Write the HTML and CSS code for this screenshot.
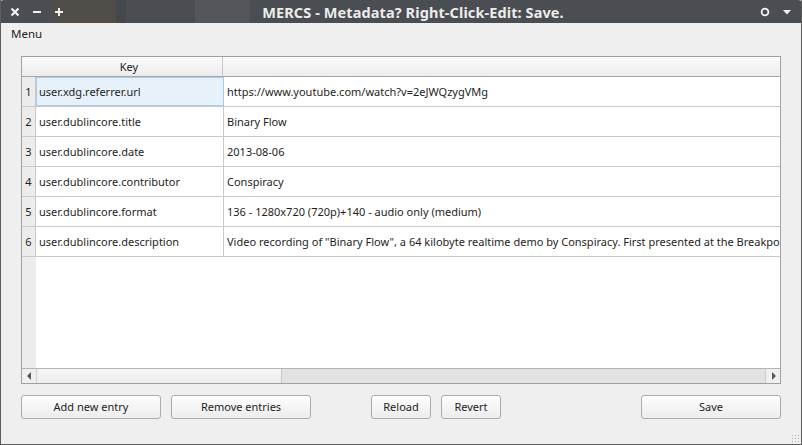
FILE: index.html
```html
<!DOCTYPE html>
<html>
<head>
<meta charset="utf-8">
<link rel="stylesheet" href="styles.css">
</head>
<body>
<div class="window">
  <div class="titlebar">
    <div class="tb-left">
      <svg class="tb-ico" width="10" height="10" viewBox="0 0 10 10"><path d="M1.5 1.5 L8.5 8.5 M8.5 1.5 L1.5 8.5" stroke="#f2f2f2" stroke-width="2.2"/></svg>
      <svg class="tb-ico" width="10" height="10" viewBox="0 0 10 10"><path d="M1 5 H9" stroke="#f2f2f2" stroke-width="2"/></svg>
      <svg class="tb-ico" width="10" height="10" viewBox="0 0 10 10"><path d="M1 5 H9 M5 1 V9" stroke="#f2f2f2" stroke-width="2"/></svg>
    </div>
    <div class="tb-title">MERCS - Metadata? Right-Click-Edit: Save.</div>
    <div class="tb-right">
      <svg width="10" height="10" viewBox="0 0 10 10"><circle cx="5" cy="5" r="3.4" fill="none" stroke="#f2f2f2" stroke-width="1.8"/></svg>
      <svg width="10" height="10" viewBox="0 0 10 10"><path d="M1 3 H9 L5 7.5 Z" fill="#f2f2f2"/></svg>
    </div>
  </div>
  <div class="menubar"><span class="menu-item">Menu</span></div>
  <div class="content">
    <div class="table">
      <div class="thead">
        <div class="th th-key">Key</div>
        <div class="th th-val"></div>
      </div>
      <div class="tbody">
        <div class="row"><div class="num">1</div><div class="cell key selected">user.xdg.referrer.url</div><div class="cell val">https://www.youtube.com/watch?v=2eJWQzygVMg</div></div>
        <div class="row"><div class="num">2</div><div class="cell key">user.dublincore.title</div><div class="cell val">Binary Flow</div></div>
        <div class="row"><div class="num">3</div><div class="cell key">user.dublincore.date</div><div class="cell val">2013-08-06</div></div>
        <div class="row"><div class="num">4</div><div class="cell key">user.dublincore.contributor</div><div class="cell val">Conspiracy</div></div>
        <div class="row"><div class="num">5</div><div class="cell key">user.dublincore.format</div><div class="cell val">136 - 1280x720 (720p)+140 - audio only (medium)</div></div>
        <div class="row"><div class="num">6</div><div class="cell key">user.dublincore.description</div><div class="cell val">Video recording of "Binary Flow", a 64 kilobyte realtime demo by Conspiracy. First presented at the Breakpoint 2010 demoparty.</div></div>
        <div class="filler"><div class="num-fill"></div><div class="blank"></div></div>
      </div>
      <div class="hscroll">
        <div class="arrow"><svg width="5" height="8" viewBox="0 0 5 8"><path d="M4 0 V8 L0 4 Z" fill="#555"/></svg></div>
        <div class="handle"></div>
        <div class="track"></div>
        <div class="arrow arrow-r"><svg width="5" height="8" viewBox="0 0 5 8"><path d="M1 0 V8 L5 4 Z" fill="#555"/></svg></div>
      </div>
    </div>
    <div class="buttons">
      <button class="btn btn-wide">Add new entry</button>
      <button class="btn btn-wide">Remove entries</button>
      <div class="spacer-a"></div>
      <button class="btn btn-small">Reload</button>
      <button class="btn btn-small">Revert</button>
      <div class="spacer-b"></div>
      <button class="btn btn-wide">Save</button>
    </div>
  </div>
  <div class="grip"></div>
</div>
</body>
</html>
```

FILE: styles.css
```css
html, body {
  margin: 0;
  padding: 0;
  background: #efefef;
}
body {
  font-family: "Noto Sans", "Open Sans", "DejaVu Sans", sans-serif;
  font-size: 11px;
  color: #1e1e1e;
}
.window {
  position: relative;
  width: 802px;
  height: 445px;
  box-sizing: border-box;
  display: flex;
  flex-direction: column;
  background: #efefef;
  border-left: 1px solid #5c5c5c;
  border-right: 1px solid #5c5c5c;
  border-bottom: 1px solid #5c5c5c;
  overflow: hidden;
}
.titlebar {
  height: 23px;
  margin: 0 -1px;
  flex: none;
  display: flex;
  align-items: center;
  background:
    linear-gradient(90deg, rgba(0,0,0,0) 0, rgba(0,0,0,0) 52px, rgba(110,80,40,0.18) 52px, rgba(110,80,40,0.18) 116px, rgba(0,0,0,0.08) 116px, rgba(0,0,0,0.08) 126px, rgba(0,0,0,0) 126px, rgba(0,0,0,0) 195px, rgba(255,255,255,0.05) 195px, rgba(255,255,255,0.05) 250px, rgba(0,0,0,0) 250px),
    #4a4d51;
  border-radius: 4px 4px 0 0;
  color: #ececec;
  position: relative;
}
.tb-left {
  display: flex;
  gap: 12px;
  padding-left: 10px;
  width: 220px;
  align-items: center;
}
.tb-title {
  flex: 1;
  text-align: center;
  font-weight: bold;
  font-size: 14.5px;
  padding-left: 24px;
  letter-spacing: 0.1px;
}
.tb-right {
  display: flex;
  gap: 12px;
  width: 220px;
  justify-content: flex-end;
  padding-right: 10px;
  align-items: center;
}
.menubar {
  height: 22px;
  flex: none;
  display: flex;
  align-items: center;
  box-sizing: border-box;
  padding-bottom: 2px;
}
.menu-item {
  padding-left: 10px;
  font-size: 11.5px;
}
.content {
  flex: 1;
  display: flex;
  flex-direction: column;
  padding: 11px 20px 0 20px;
}
.table {
  height: 328px;
  box-sizing: border-box;
  border: 1px solid #a0a0a0;
  background: #fff;
  display: flex;
  flex-direction: column;
}
.thead {
  height: 20px;
  flex: none;
  display: flex;
  background: linear-gradient(#fbfbfb, #ececec);
  border-bottom: 1px solid #a8a8a8;
  box-sizing: border-box;
}
.th {
  display: flex;
  align-items: center;
  justify-content: center;
  box-sizing: border-box;
}
.th-key {
  width: 201px;
  padding-left: 14px;
  border-right: 1px solid #c8c8c8;
}
.th-val {
  flex: 1;
}
.tbody {
  flex: 1;
  display: flex;
  flex-direction: column;
}
.row {
  height: 30px;
  display: flex;
  flex: none;
  box-sizing: border-box;
  border-bottom: 1px solid #c9c9c9;
}
.num {
  width: 13px;
  flex: none;
  background: #ececec;
  border-right: 1px solid #c9c9c9;
  display: flex;
  align-items: center;
  justify-content: center;
  font-size: 11px;
  padding-bottom: 1px;
}
.cell {
  display: flex;
  align-items: center;
  box-sizing: border-box;
  padding-left: 3px;
  padding-bottom: 1px;
  white-space: nowrap;
  overflow: hidden;
}
.key {
  width: 188px;
  flex: none;
  border-right: 1px solid #c9c9c9;
}
.key.selected {
  background: #e6f1fa;
  border: 1px solid #a9cbe8;
  padding-left: 2px;
}
.val {
  flex: 1;
  min-width: 0;
}
.filler {
  flex: 1;
  display: flex;
}
.num-fill {
  width: 14px;
  background: #ececec;
}
.blank {
  flex: 1;
}
.hscroll {
  height: 14px;
  flex: none;
  display: flex;
  border-top: 1px solid #b4b4b4;
  background: #e2e2e2;
}
.arrow {
  width: 14px;
  flex: none;
  display: flex;
  align-items: center;
  justify-content: center;
  background: #efefef;
  border-right: 1px solid #cdcdcd;
}
.arrow-r {
  border-right: none;
  border-left: 1px solid #cdcdcd;
}
.handle {
  width: 244px;
  flex: none;
  background: linear-gradient(#f6f6f6, #ececec);
  border-right: 1px solid #c4c4c4;
}
.track {
  flex: 1;
}
.buttons {
  display: flex;
  margin-top: 11px;
  height: 24px;
  gap: 10px;
}
.btn {
  font-family: inherit;
  font-size: 11px;
  color: #1e1e1e;
  height: 24px;
  margin: 0;
  padding: 0 0 2px 0;
  border: 1px solid #ababab;
  border-radius: 3px;
  background: linear-gradient(#fdfdfd, #ececec);
}
.btn-wide {
  width: 140px;
}
.btn-small {
  width: 60px;
}
.spacer-a {
  width: 40px;
}
.spacer-b {
  width: 120px;
}
.grip {
  position: absolute;
  right: 2px;
  bottom: 2px;
  width: 8px;
  height: 8px;
  background-image: radial-gradient(circle, #b0b0b0 0.7px, transparent 0.8px);
  background-size: 3px 3px;
}
```
